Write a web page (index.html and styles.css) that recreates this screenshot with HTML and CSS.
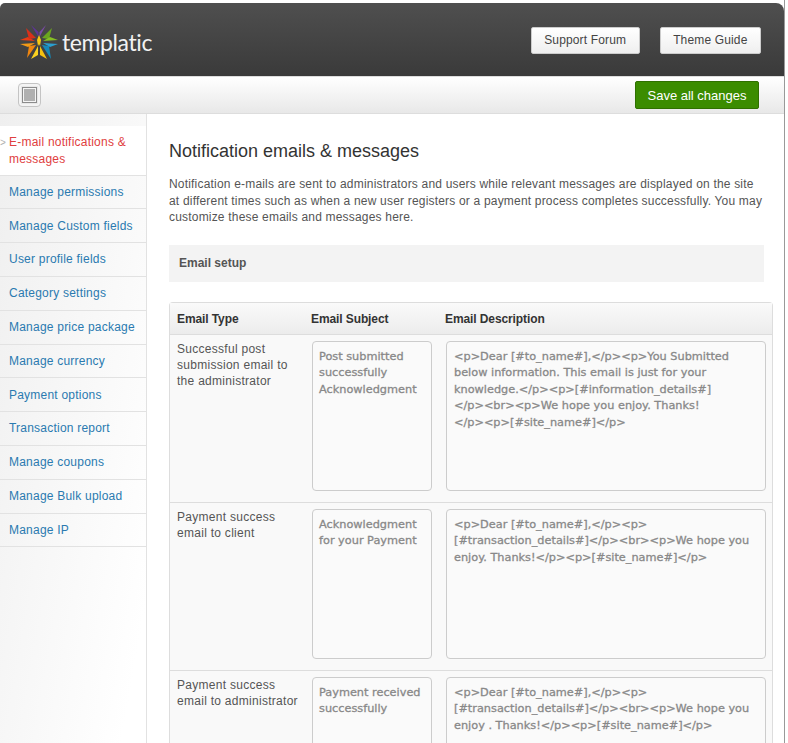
FILE: index.html
```html
<!DOCTYPE html>
<html lang="en">
<head>
<meta charset="utf-8">
<title>Notification emails &amp; messages</title>
<link rel="stylesheet" href="styles.css">
</head>
<body>
<div class="wrap">
  <header class="top">
    <a class="logo" href="#">
      <svg class="star" width="38" height="36" viewBox="-19 -18 38 36" aria-hidden="true">
        <g>
          <path d="M-.5 -5 L-8 -17 L-.5 -10 Z" fill="#5e3596"/>
          <path d="M.5 -5 L7 -17 L.5 -10 Z" fill="#7b4aa8"/>
          <path d="M3 -4 L13 -14 L10 -3 Z" fill="#6aa51f"/>
          <path d="M4 -1 L19 -2 L11 -5 Z" fill="#86bf24"/>
          <path d="M4 1 L19 2 L11 5 Z" fill="#2a9fd0"/>
          <path d="M3 3 L12 17 L10 4 Z" fill="#1688b8"/>
          <path d="M1 4 L8 17 L1 13 Z" fill="#f6c210"/>
          <path d="M-1 4 L-8 17 L-1 13 Z" fill="#fbd220"/>
          <path d="M-3 3 L-12 16 L-10 4 Z" fill="#f0860f"/>
          <path d="M-4 1 L-19 2 L-11 5 Z" fill="#f39a16"/>
          <path d="M-4 -1 L-19 -2 L-11 -5 Z" fill="#e83a14"/>
          <path d="M-3 -4 L-13 -14 L-10 -3 Z" fill="#d8301a"/>
          <path d="M0 -7 L2 -2 L1 4 L0 2 L-1 4 L-2 -2 Z" fill="#f8c812"/>
        </g>
      </svg>
      <span class="logo-text">templatic</span>
    </a>
    <nav class="top-links">
      <a class="top-btn" href="#">Support Forum</a>
      <a class="top-btn" href="#">Theme Guide</a>
    </nav>
  </header>
  <div class="toolbar">
    <span class="screen-btn"><span class="screen-glyph"></span></span>
    <button class="save" type="button">Save all changes</button>
  </div>
  <div class="body-row">
    <aside class="side">
      <ul class="menu">
        <li class="menu-item current"><a href="#">E-mail notifications &amp; messages</a></li>
        <li class="menu-item"><a href="#">Manage permissions</a></li>
        <li class="menu-item"><a href="#">Manage Custom fields</a></li>
        <li class="menu-item"><a href="#">User profile fields</a></li>
        <li class="menu-item"><a href="#">Category settings</a></li>
        <li class="menu-item"><a href="#">Manage price package</a></li>
        <li class="menu-item"><a href="#">Manage currency</a></li>
        <li class="menu-item"><a href="#">Payment options</a></li>
        <li class="menu-item"><a href="#">Transaction report</a></li>
        <li class="menu-item"><a href="#">Manage coupons</a></li>
        <li class="menu-item"><a href="#">Manage Bulk upload</a></li>
        <li class="menu-item"><a href="#">Manage IP</a></li>
      </ul>
    </aside>
    <main class="content">
      <h1 class="title">Notification emails &amp; messages</h1>
      <p class="intro">Notification e-mails are sent to administrators and users while relevant messages are displayed on the site at different times such as when a new user registers or a payment process completes successfully. You may customize these emails and messages here.</p>
      <h2 class="band">Email setup</h2>
      <div class="grid">
        <div class="row head">
          <div class="c-type">Email Type</div>
          <div class="c-subject">Email Subject</div>
          <div class="c-desc">Email Description</div>
        </div>
        <div class="row">
          <div class="c-type">Successful post submission email to the administrator</div>
          <div class="c-subject"><textarea class="field">Post submitted successfully Acknowledgment</textarea></div>
          <div class="c-desc"><textarea class="field">&lt;p&gt;Dear [#to_name#],&lt;/p&gt;&lt;p&gt;You Submitted
below information. This email is just for your
knowledge.&lt;/p&gt;&lt;p&gt;[#information_details#]
&lt;/p&gt;&lt;br&gt;&lt;p&gt;We hope you enjoy. Thanks!
&lt;/p&gt;&lt;p&gt;[#site_name#]&lt;/p&gt;</textarea></div>
        </div>
        <div class="row">
          <div class="c-type">Payment success email to client</div>
          <div class="c-subject"><textarea class="field">Acknowledgment for your Payment</textarea></div>
          <div class="c-desc"><textarea class="field">&lt;p&gt;Dear [#to_name#],&lt;/p&gt;&lt;p&gt;
[#transaction_details#]&lt;/p&gt;&lt;br&gt;&lt;p&gt;We hope you
enjoy. Thanks!&lt;/p&gt;&lt;p&gt;[#site_name#]&lt;/p&gt;</textarea></div>
        </div>
        <div class="row">
          <div class="c-type">Payment success email to administrator</div>
          <div class="c-subject"><textarea class="field">Payment received successfully</textarea></div>
          <div class="c-desc"><textarea class="field">&lt;p&gt;Dear [#to_name#],&lt;/p&gt;&lt;p&gt;
[#transaction_details#]&lt;/p&gt;&lt;br&gt;&lt;p&gt;We hope you
enjoy . Thanks!&lt;/p&gt;&lt;p&gt;[#site_name#]&lt;/p&gt;</textarea></div>
        </div>
      </div>
    </main>
  </div>
</div>
</body>
</html>
```
FILE: styles.css
```css
* { box-sizing: border-box; }
html, body { margin: 0; height: 743px; overflow: hidden; background: #fff; }
body { font-family: "Liberation Sans", Arial, sans-serif; font-size: 12px; color: #555; }
a { text-decoration: none; }
.wrap { width: 785px; padding-top: 3px; border-right: 1px solid #999; height: 743px; overflow: hidden; }

.top { height: 73px; border-radius: 5px 8px 0 0; background: linear-gradient(#4f4f4f, #3a3a3a); display: flex; align-items: center; justify-content: space-between; padding: 0 23px 0 20px; }
.logo { display: flex; align-items: center; gap: 4px; margin-top: 5px; }
.star { display: block; }
.logo-text { font-family: "Lato", sans-serif; font-size: 23px; color: #f2f2f2; letter-spacing: -0.4px; line-height: 30px; }
.top-links { display: flex; gap: 20px; margin-top: 2px; }
.top-btn { display: block; height: 27px; line-height: 25px; padding: 0 12.5px; border: 1px solid #ccc; border-radius: 2px; background: linear-gradient(#fff, #efefef); color: #444; font-size: 12px; letter-spacing: 0.15px; }

.toolbar { height: 38px; background: linear-gradient(#fff, #e8e8e8); border-top: 1px solid #ddd; border-bottom: 1px solid #ddd; display: flex; align-items: center; justify-content: space-between; padding: 0 25px 0 18px; }
.screen-btn { width: 23px; height: 24px; border: 1px solid #c4c4c4; border-radius: 4px; background: #f4f4f4; display: flex; align-items: center; justify-content: center; }
.screen-glyph { width: 15px; height: 16px; border: 1px solid #8c8c8c; padding: 1px; background: #b0b0b0 content-box; box-shadow: 0 0 0 1px #e8e8e8; }
.save { height: 28px; width: 124px; padding: 0; border: 1px solid #2f7000; border-radius: 2px; background: #3b8c00; color: #fff; font-family: inherit; font-size: 13px; }

.body-row { display: flex; align-items: stretch; }
.side { width: 147px; min-height: 640px; border-right: 1px solid #e2e2e2; background: linear-gradient(100deg, #efefef, #fff 85%); flex: none; }
.menu { list-style: none; margin: 0; padding: 0; }
.menu-item { border-bottom: 1px solid #e2e2e2; padding: 9.2px 0 7.8px 9px; line-height: 15.8px; font-size: 12px; letter-spacing: 0.22px; }
.menu-item a { color: #2a7ab0; }
.menu-item.current { margin-top: 12px; padding: 8px 9px 6.7px; line-height: 17px; background: #fff; position: relative; }
.menu-item.current a { color: #e04040; }
.menu-item.current::before { content: ">"; position: absolute; left: 0; top: 8px; font-size: 10px; color: #b0b0b0; }

.content { flex: 1; padding: 25px 11px 0 22px; min-width: 0; }
.title { margin: 0 0 13px; font-size: 18px; font-weight: 400; line-height: 24px; color: #333; }
.intro { margin: 0 8px 19px 0; font-size: 12px; line-height: 16.6px; color: #555; letter-spacing: 0.19px; }
.band { margin: 0 9px 20px 0; height: 37px; line-height: 37px; padding: 0 10px; background: #f3f3f3; font-size: 12px; font-weight: 700; color: #555; }
.grid { border: 1px solid #ddd; border-bottom: 0; border-radius: 4px 4px 0 0; background: #f9f9f9; }
.row { display: grid; grid-template-columns: 134px 134px 1fr; padding: 6px 7px 11px; border-top: 1px solid #ddd; line-height: 16.3px; letter-spacing: 0.28px; }
.row.head { border-top: 0; height: 31px; padding: 8px 7px 0; background: linear-gradient(#fafafa, #ececec); font-weight: 700; color: #333; letter-spacing: -0.1px; }
.c-type { padding-right: 8px; }
.field { display: block; width: 120px; height: 150px; margin: 0 0 0 1px; padding: 7px 6px 6px; border: 1px solid #ccc; border-radius: 4px; background: #fafafa; resize: none; overflow: hidden; font-family: "DejaVu Sans", sans-serif; font-size: 11.3px; line-height: 16.5px; color: #888; letter-spacing: 0; -webkit-text-stroke: 0.3px #888; }
.c-desc .field { width: 320px; padding: 7px 7px 6px; }
```
